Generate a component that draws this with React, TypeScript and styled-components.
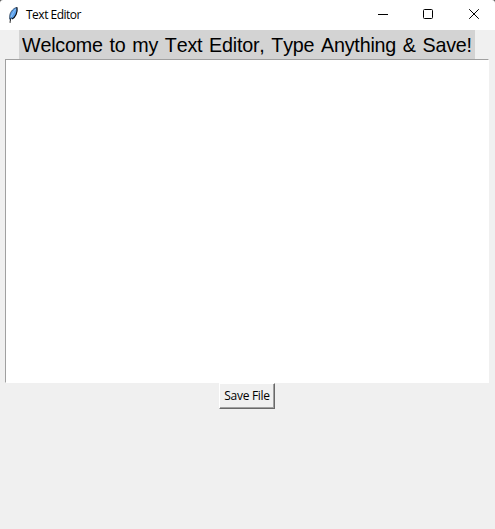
import React from "react";
import styled, { createGlobalStyle } from "styled-components";

const GlobalStyle = createGlobalStyle`
  html, body { margin: 0; background: #f0f0f0; overflow: hidden; }
  * { box-sizing: border-box; }
`;

const Window = styled.main`
  width: 495px;
  height: 529px;
  display: flex;
  flex-direction: column;
  background: #f0f0f0;
  overflow: hidden;
`;

const Content = styled.div`
  width: 494px;
  display: flex;
  flex-direction: column;
  align-items: center;
`;

const TitleBar = styled.header`
  width: 100%;
  height: 30px;
  flex: none;
  display: flex;
  align-items: center;
  padding-left: 7px;
  background: #fff;
  border-top-left-radius: 3px;
  border-top-right-radius: 3px;
`;

const Corners = styled.div`
  width: 100%;
  flex: none;
  background: linear-gradient(#555, #555) top / 100% 3px no-repeat, #f0f0f0;
`;

const WindowTitle = styled.span`
  flex: 1;
  margin-left: 7px;
  font: 12px/16px "Open Sans", sans-serif;
  letter-spacing: -0.5px;
  color: #000;
`;

const Controls = styled.div`
  display: flex;
  height: 100%;
`;

const ControlButton = styled.button<{ $width: number }>`
  width: ${(p) => p.$width}px;
  height: 28px;
  padding: 0;
  border: 0;
  background: transparent;
  display: flex;
  align-items: center;
  justify-content: center;
`;

const Heading = styled.h1`
  width: 456px;
  height: 29px;
  flex: none;
  margin: 0;
  padding: 0 3px;
  background: #d3d3d3;
  color: #000;
  font: 400 21px/30px "Liberation Sans", Arial, sans-serif;
  font-kerning: none;
  letter-spacing: -0.22px;
  word-spacing: 1.6px;
  white-space: nowrap;
`;

const Condensed = styled.span`
  display: inline-block;
  transform: scaleX(0.938);
  transform-origin: left;
`;

const Editor = styled.textarea`
  width: 484px;
  height: 324px;
  flex: none;
  display: block;
  padding: 2px;
  border: 1px solid #fff;
  border-top-color: #a0a0a0;
  border-left-color: #a0a0a0;
  border-radius: 0;
  outline: 0;
  resize: none;
  background: #fff;
  font: 13px "Liberation Mono", monospace;
`;

const SaveButton = styled.button`
  width: 56px;
  height: 26px;
  flex: none;
  padding: 0;
  border: 1px solid #fff;
  border-right-color: #696969;
  border-bottom-color: #696969;
  box-shadow: inset -1px -1px #a0a0a0;
  border-radius: 0;
  background: #f0f0f0;
  color: #000;
  font: 12px/22px "Open Sans", sans-serif;
  letter-spacing: -0.3px;
  white-space: nowrap;
`;

const FeatherIcon = () => (
  <svg width="12" height="18" viewBox="0 0 12 18">
    <path d="M10 1.4C7 1.8 3.4 5.3 2.8 9.2L2.6 13.4L5 13C8.4 11.2 10.8 6.5 10 1.4Z" fill="#5a9fea" />
    <path d="M10 1.4C7 1.8 3.4 5.3 2.8 9.2L2.6 13.4" fill="none" stroke="#26384f" strokeWidth="0.8" />
    <path d="M10 1.4C10.8 6.5 8.4 11.2 5 13" fill="none" stroke="#0b0f16" strokeWidth="1.2" />
    <path d="M8.8 3C6.4 6 4.4 9.6 3.8 12" fill="none" stroke="#a9d2fb" strokeWidth="0.7" />
    <path d="M4.2 11.5C3.6 13 3.1 14.5 3.1 16.8" fill="none" stroke="#111" strokeWidth="1" />
  </svg>
);

export default function App() {
  return (
    <>
      <GlobalStyle />
      <Window>
        <Corners>
          <TitleBar>
            <FeatherIcon />
            <WindowTitle>Text Editor</WindowTitle>
            <Controls>
              <ControlButton $width={40} aria-label="Minimize">
                <svg width="10" height="10" viewBox="0 0 10 10"><path d="M0 5.5H10" stroke="#000" /></svg>
              </ControlButton>
              <ControlButton $width={50} aria-label="Maximize">
                <svg width="10" height="10" viewBox="0 0 10 10"><rect x="0.5" y="0.5" width="9" height="9" rx="1" fill="none" stroke="#000" /></svg>
              </ControlButton>
              <ControlButton $width={42} aria-label="Close">
                <svg width="10" height="10" viewBox="0 0 10 10"><path d="M0.2 0.2L9.8 9.8M9.8 0.2L0.2 9.8" stroke="#000" /></svg>
              </ControlButton>
            </Controls>
          </TitleBar>
        </Corners>
        <Content>
          <Heading><Condensed>Welcome to my Text Editor, Type Anything &amp; Save!</Condensed></Heading>
          <Editor aria-label="Text" spellCheck={false} />
          <SaveButton>Save File</SaveButton>
        </Content>
      </Window>
    </>
  );
}
